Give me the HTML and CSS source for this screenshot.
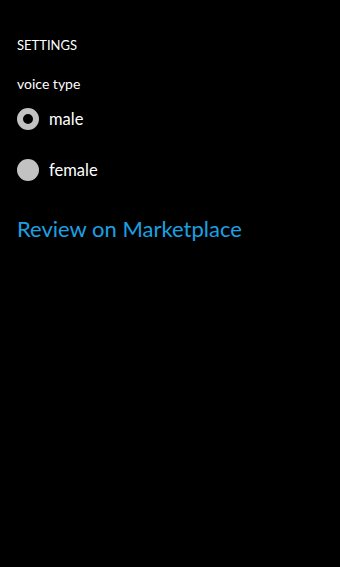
FILE: index.html
```html
<!DOCTYPE html>
<html>
<head>
<meta charset="utf-8">
<link rel="stylesheet" href="styles.css">
</head>
<body>
<div class="page">
  <div class="title">SETTINGS</div>
  <div class="label">voice type</div>
  <div class="options">
    <div class="option">
      <span class="radio checked"></span>
      <span class="opt-text">male</span>
    </div>
    <div class="option">
      <span class="radio"></span>
      <span class="opt-text">female</span>
    </div>
  </div>
  <a class="link" href="#">Review on Marketplace</a>
</div>
</body>
</html>
```
FILE: styles.css
```css
html, body {
  margin: 0;
  padding: 0;
  background: #000;
}
body {
  width: 340px;
  height: 567px;
  overflow: hidden;
  font-family: "Lato", "Open Sans", sans-serif;
  color: #fff;
}
.page {
  display: flex;
  flex-direction: column;
  padding: 36px 17px 0 17px;
}
.title {
  font-size: 13px;
  line-height: 18px;
}
.label {
  margin-top: 21px;
  font-size: 14px;
  line-height: 18px;
}
.options {
  display: flex;
  flex-direction: column;
  gap: 29px;
  margin-top: 15px;
}
.option {
  display: flex;
  align-items: center;
  gap: 10px;
  height: 22px;
}
.radio {
  width: 22px;
  height: 22px;
  border-radius: 50%;
  background: #c2c2c2;
  box-sizing: border-box;
  flex: none;
}
.radio.checked {
  background: #000;
  border: 6.5px solid #c2c2c2;
}
.opt-text {
  font-size: 16.5px;
  line-height: 22px;
}
.link {
  margin-top: 34px;
  font-size: 22px;
  line-height: 28px;
  color: #1ba1e2;
  text-decoration: none;
}
```
